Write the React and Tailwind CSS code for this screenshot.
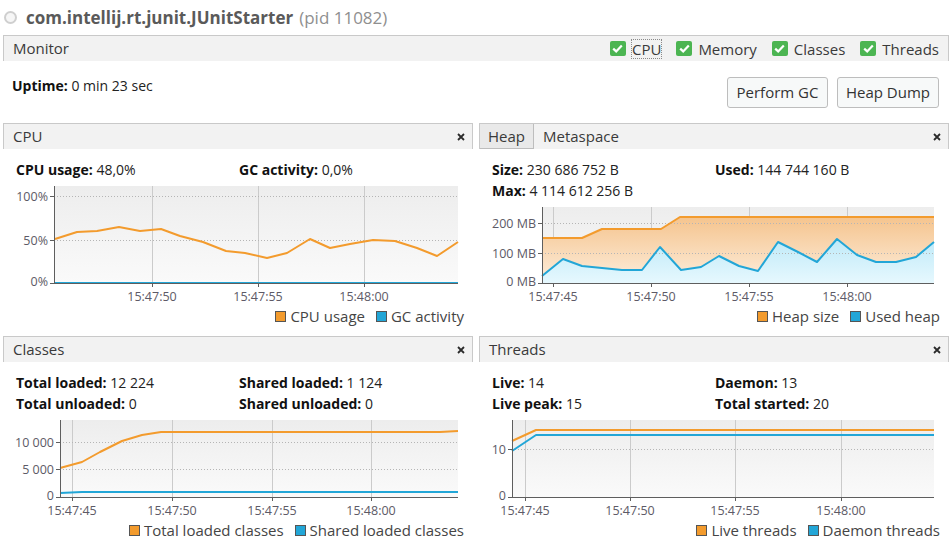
import React from "react";

const ORANGE = "#f39b2d";
const BLUE = "#22a6d7";

const charts = {
  cpu: {
    ox: 3,
    oy: 180,
    h: 126,
    plot: { l: 54, t: 186, r: 458, b: 283 },
    yTicks: [
      { y: 196, label: "100%" },
      { y: 240, label: "50%" },
      { y: 283, label: "0%" },
    ],
    xTicks: [
      { x: 152, label: "15:47:50" },
      { x: 258, label: "15:47:55" },
      { x: 364, label: "15:48:00" },
    ],
    series: [
      {
        color: BLUE,
        pts: [
          [55, 283],
          [458, 283],
        ],
      },
      {
        color: ORANGE,
        pts: [
          [55, 239], [77, 232], [97, 231], [119, 227], [140, 231], [161, 229],
          [180, 236], [203, 242], [226, 251], [245, 253], [267, 258], [287, 253],
          [310, 239], [330, 248], [350, 244], [373, 240], [395, 241], [417, 248],
          [437, 256], [458, 242],
        ],
      },
    ],
  },
  heap: {
    ox: 479,
    oy: 201,
    h: 105,
    plot: { l: 542, t: 207, r: 934, b: 283 },
    yTicks: [
      { y: 223, label: "200 MB" },
      { y: 253, label: "100 MB" },
      { y: 283, label: "0 MB" },
    ],
    xTicks: [
      { x: 553, label: "15:47:45" },
      { x: 651, label: "15:47:50" },
      { x: 749, label: "15:47:55" },
      { x: 847, label: "15:48:00" },
    ],
    series: [
      {
        color: ORANGE,
        fill: "url(#heapFill)",
        pts: [
          [542, 238], [582, 238], [602, 229], [661, 229], [680, 217], [934, 217],
        ],
      },
      {
        color: BLUE,
        fill: "url(#usedFill)",
        pts: [
          [542, 276], [563, 259], [582, 266], [602, 268], [622, 270], [642, 270],
          [660, 247], [681, 270], [701, 267], [719, 256], [739, 266], [758, 271],
          [778, 242], [798, 252], [817, 262], [837, 239], [857, 255], [876, 262],
          [896, 262], [916, 257], [934, 242],
        ],
      },
    ],
  },
  classes: {
    ox: 3,
    oy: 414,
    h: 106,
    plot: { l: 60, t: 420, r: 458, b: 497 },
    yTicks: [
      { y: 442, label: "10 000" },
      { y: 469, label: "5 000" },
      { y: 497, label: "0" },
    ],
    xTicks: [
      { x: 72, label: "15:47:45" },
      { x: 172, label: "15:47:50" },
      { x: 272, label: "15:47:55" },
      { x: 371, label: "15:48:00" },
    ],
    series: [
      {
        color: ORANGE,
        pts: [
          [60, 468], [82, 462], [100, 452], [122, 441], [142, 435], [161, 432],
          [440, 432], [458, 431],
        ],
      },
      {
        color: BLUE,
        pts: [
          [60, 493], [82, 492], [458, 492],
        ],
      },
    ],
  },
  threads: {
    ox: 479,
    oy: 414,
    h: 106,
    plot: { l: 512, t: 420, r: 934, b: 497 },
    yTicks: [
      { y: 449, label: "10" },
      { y: 497, label: "0" },
    ],
    xTicks: [
      { x: 525, label: "15:47:45" },
      { x: 630, label: "15:47:50" },
      { x: 735, label: "15:47:55" },
      { x: 841, label: "15:48:00" },
    ],
    series: [
      {
        color: ORANGE,
        pts: [
          [512, 441], [536, 430], [934, 430],
        ],
      },
      {
        color: BLUE,
        pts: [
          [512, 451], [536, 435], [934, 435],
        ],
      },
    ],
  },
};

function Chart({ data }) {
  const { ox, oy, h, plot, yTicks, xTicks, series } = data;
  const l = plot.l - ox;
  const t = plot.t - oy;
  const r = plot.r - ox;
  const b = plot.b - oy;
  const pt = (p) => `${p[0] - ox},${p[1] - oy}`;

  return (
    <svg width="470" height={h} className="block shrink-0">
      <defs>
        <linearGradient id="plotBg" x1="0" y1="0" x2="0" y2="1">
          <stop offset="0" stopColor="#ededed" />
          <stop offset="1" stopColor="#fafafa" />
        </linearGradient>
        <linearGradient id="heapFill" x1="0" y1="0" x2="0" y2="1">
          <stop offset="0" stopColor="#f5c48e" />
          <stop offset="1" stopColor="#fdeedd" />
        </linearGradient>
        <linearGradient id="usedFill" x1="0" y1="0" x2="0" y2="1">
          <stop offset="0" stopColor="#bfeaf8" />
          <stop offset="1" stopColor="#e6f8fe" />
        </linearGradient>
      </defs>
      <rect x={l} y={t} width={r - l} height={b - t} fill="url(#plotBg)" />
      {xTicks.map((tk) => (
        <line
          key={tk.label}
          x1={tk.x - ox + 0.5}
          x2={tk.x - ox + 0.5}
          y1={t}
          y2={b + 4}
          stroke="#cbcbcb"
        />
      ))}
      {series
        .filter((s) => s.fill)
        .map((s, i) => (
          <polygon
            key={"f" + i}
            points={`${l},${b} ${s.pts.map(pt).join(" ")} ${r},${b}`}
            fill={s.fill}
          />
        ))}
      {yTicks
        .filter((tk) => tk.y !== plot.b)
        .map((tk) => (
          <line
            key={tk.label}
            x1={l}
            x2={r}
            y1={tk.y - oy + 0.5}
            y2={tk.y - oy + 0.5}
            stroke="#b5b5b5"
            strokeDasharray="1 2"
          />
        ))}
      {series.map((s, i) => (
        <polyline
          key={"s" + i}
          points={s.pts.map(pt).join(" ")}
          fill="none"
          stroke={s.color}
          strokeWidth="2"
          strokeLinejoin="round"
        />
      ))}
      <line x1={l + 0.5} x2={l + 0.5} y1={t} y2={b + 1} stroke="#5e5e5e" />
      <line x1={l} x2={r} y1={b + 0.5} y2={b + 0.5} stroke="#5e5e5e" />
      {yTicks.map((tk) => (
        <g key={"y" + tk.label}>
          <line
            x1={l - 4}
            x2={l}
            y1={tk.y - oy + 0.5}
            y2={tk.y - oy + 0.5}
            stroke="#5e5e5e"
          />
          <text
            x={l - 6}
            y={tk.y - oy + (tk.y === plot.b ? 3 : 4.5)}
            textAnchor="end"
            fontSize="12.5"
            fill="#5d5a66"
          >
            {tk.label}
          </text>
        </g>
      ))}
      {xTicks.map((tk) => (
        <g key={"x" + tk.label}>
          <line
            x1={tk.x - ox + 0.5}
            x2={tk.x - ox + 0.5}
            y1={b}
            y2={b + 4}
            stroke="#5e5e5e"
          />
          <text
            x={tk.x - ox}
            y={b + 18}
            textAnchor="middle"
            fontSize="12.5"
            fill="#5d5a66"
          >
            {tk.label}
          </text>
        </g>
      ))}
    </svg>
  );
}

function CloseIcon() {
  return (
    <svg width="8" height="8" viewBox="0 0 8 8" className="shrink-0">
      <path d="M1 1L7 7M7 1L1 7" stroke="#2b2b2b" strokeWidth="1.8" />
    </svg>
  );
}

function CheckBox({ label, focused }) {
  return (
    <div className="flex items-center gap-[5px]">
      <div className="w-[16px] h-[15px] rounded-[2px] bg-[#4cb552] flex items-center justify-center">
        <svg width="11" height="9" viewBox="0 0 11 9">
          <path
            d="M1.2 4.6L4.2 7.4L9.8 1.4"
            fill="none"
            stroke="white"
            strokeWidth="2.2"
          />
        </svg>
      </div>
      <span
        className={
          focused
            ? "border border-dotted border-[#8a8a8a] leading-[18px]"
            : "leading-[18px] border border-transparent"
        }
      >
        {label}
      </span>
    </div>
  );
}

function Legend({ items }) {
  return (
    <div className="h-[21px] flex items-center justify-end gap-[11px] pr-[9px] text-[15px] text-[#454545]">
      {items.map((it) => (
        <div key={it.label} className="flex items-center gap-[4px]">
          <div
            className={
              it.color === "orange"
                ? "w-[11px] h-[11px] border border-[#555] bg-[#f39b2d]"
                : "w-[11px] h-[11px] border border-[#555] bg-[#22a6d7]"
            }
          />
          <span>{it.label}</span>
        </div>
      ))}
    </div>
  );
}

function Stat({ label, value }) {
  return (
    <div className="whitespace-nowrap">
      <span className="font-bold text-[#111]">{label}:</span>{" "}
      <span className="text-[#222]">{value}</span>
    </div>
  );
}

function Stats({ rows }) {
  return (
    <div className="pt-[10px] pl-[13px] grid grid-cols-[223px_1fr] text-[14px] leading-[21px]">
      {rows.map(([label, value], i) =>
        label ? <Stat key={i} label={label} value={value} /> : <div key={i} />
      )}
    </div>
  );
}

function PanelHeader({ children }) {
  return (
    <div className="h-[26px] bg-[#f2f2f2] border-t border-l border-r border-[#c9c9c9] flex items-center justify-between pr-[7px] text-[15px] text-[#3a3a3a]">
      {children}
      <CloseIcon />
    </div>
  );
}

export default function App() {
  return (
    <div className="w-[951px] h-[545px] bg-white overflow-hidden font-['Open_Sans',sans-serif] text-[#333]">
      <div className="h-[35px] flex items-center pl-[4px]">
        <div className="w-[13px] h-[13px] rounded-full border-2 border-[#cfcfcf] bg-[#f6f6f6]" />
        <span className="ml-[9px] text-[17px] font-bold text-[#5a5a5a]">
          com.intellij.rt.junit.JUnitStarter
        </span>
        <span className="ml-[6px] text-[17px] text-[#8f8f8f]">(pid 11082)</span>
      </div>

      <div className="ml-[3px] mr-[2px] h-[26px] bg-[#f2f2f2] border-t border-l border-r border-[#c9c9c9] flex items-center justify-between pl-[9px] pr-[8px] text-[15px] text-[#3a3a3a]">
        <span>Monitor</span>
        <div className="flex items-center gap-[14px]">
          <CheckBox label="CPU" focused />
          <CheckBox label="Memory" />
          <CheckBox label="Classes" />
          <CheckBox label="Threads" />
        </div>
      </div>

      <div className="h-[62px] flex items-start justify-between pl-[12px] pr-[12px] pt-[15px]">
        <div className="text-[14px] leading-[20px]">
          <span className="font-bold text-[#111]">Uptime:</span>{" "}
          <span className="text-[#222]">0 min 23 sec</span>
        </div>
        <div className="flex gap-[9px] mt-[1px]">
          <button className="h-[31px] w-[101px] whitespace-nowrap rounded-[3px] border border-[#bdbdbd] bg-[#f7f9f9] text-[15px] text-[#333]">
            Perform GC
          </button>
          <button className="h-[31px] w-[102px] whitespace-nowrap rounded-[3px] border border-[#bdbdbd] bg-[#f7f9f9] text-[15px] text-[#333]">
            Heap Dump
          </button>
        </div>
      </div>

      <div className="ml-[3px] mr-[2px] grid grid-cols-[470px_470px] grid-rows-[213px_209px] gap-x-[6px]">
        <div className="flex flex-col">
          <PanelHeader>
            <span className="pl-[9px]">CPU</span>
          </PanelHeader>
          <Stats
            rows={[
              ["CPU usage", "48,0%"],
              ["GC activity", "0,0%"],
            ]}
          />
          <Chart data={charts.cpu} />
          <Legend
            items={[
              { label: "CPU usage", color: "orange" },
              { label: "GC activity", color: "blue" },
            ]}
          />
        </div>

        <div className="flex flex-col">
          <PanelHeader>
            <div className="flex items-stretch h-full">
              <div className="flex items-center px-[8px] bg-[#e9e9e9] border-r border-b border-[#bdbdbd] text-[#3a3a3a]">
                Heap
              </div>
              <div className="flex items-center pl-[9px]">Metaspace</div>
            </div>
          </PanelHeader>
          <Stats
            rows={[
              ["Size", "230 686 752 B"],
              ["Used", "144 744 160 B"],
              ["Max", "4 114 612 256 B"],
              [null, null],
            ]}
          />
          <Chart data={charts.heap} />
          <Legend
            items={[
              { label: "Heap size", color: "orange" },
              { label: "Used heap", color: "blue" },
            ]}
          />
        </div>

        <div className="flex flex-col">
          <PanelHeader>
            <span className="pl-[9px]">Classes</span>
          </PanelHeader>
          <Stats
            rows={[
              ["Total loaded", "12 224"],
              ["Shared loaded", "1 124"],
              ["Total unloaded", "0"],
              ["Shared unloaded", "0"],
            ]}
          />
          <Chart data={charts.classes} />
          <Legend
            items={[
              { label: "Total loaded classes", color: "orange" },
              { label: "Shared loaded classes", color: "blue" },
            ]}
          />
        </div>

        <div className="flex flex-col">
          <PanelHeader>
            <span className="pl-[9px]">Threads</span>
          </PanelHeader>
          <Stats
            rows={[
              ["Live", "14"],
              ["Daemon", "13"],
              ["Live peak", "15"],
              ["Total started", "20"],
            ]}
          />
          <Chart data={charts.threads} />
          <Legend
            items={[
              { label: "Live threads", color: "orange" },
              { label: "Daemon threads", color: "blue" },
            ]}
          />
        </div>
      </div>
    </div>
  );
}
